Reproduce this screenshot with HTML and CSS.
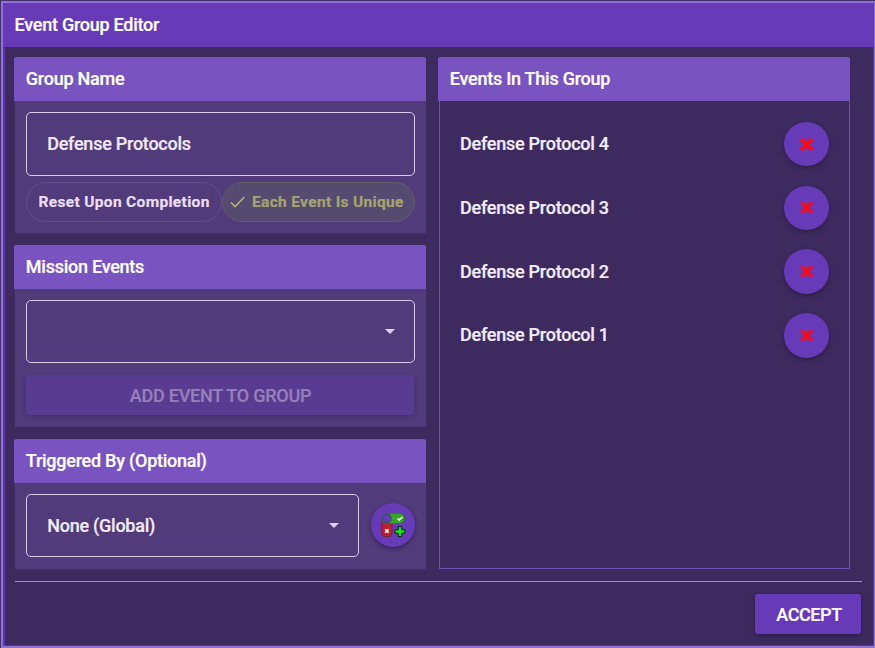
FILE: index.html
```html
<!DOCTYPE html>
<html lang="en">
<head>
<meta charset="utf-8">
<title>Event Group Editor</title>
<link rel="stylesheet" href="styles.css">
</head>
<body>
<div class="dialog">
  <header class="dialog-title">Event Group Editor</header>
  <main class="dialog-body">
    <div class="column">
      <section class="card name-card">
        <h2>Group Name</h2>
        <div class="card-body">
          <div class="field">Defense Protocols</div>
          <div class="chips">
            <span class="chip">Reset Upon Completion</span>
            <span class="chip selected"><svg width="18" height="18" viewBox="0 0 18 18"><path d="M2 9.500 6 13.500 15.500 4"/></svg>Each Event Is Unique</span>
          </div>
        </div>
      </section>
      <section class="card mission-card">
        <h2>Mission Events</h2>
        <div class="card-body">
          <div class="field select"><span></span><i class="arrow"></i></div>
          <button class="btn add" disabled>ADD EVENT TO GROUP</button>
        </div>
      </section>
      <section class="card trigger-card">
        <h2>Triggered By (Optional)</h2>
        <div class="card-body trigger-row">
          <div class="field select"><span>None (Global)</span><i class="arrow"></i></div>
          <button class="fab" aria-label="Add trigger">
            <svg width="26" height="26" viewBox="0 0 26 26">
              <path d="M1.600 10h10.500v11a3.500 3.500 0 0 1-3.500 3.500H5.100a3.500 3.500 0 0 1-3.500-3.500z" fill="#b9202e" stroke="#7d1e40"/>
              <rect x="1.600" y="1.300" width="23" height="10.200" rx="5.100" fill="#39a22f" stroke="#327238"/>
              <circle cx="6.800" cy="6.400" r="4.200" fill="#673ab7" stroke="#3c4a80" stroke-width="1.400"/>
              <path d="m17.500 6.300 1.700 1.700 3.300-3.300" fill="none" stroke="#dfffe0" stroke-width="1.600"/>
              <path d="m5.200 17.300 3.400 3.400m0-3.400-3.400 3.400" stroke="#fff" stroke-width="1.600"/>
              <path d="M18.300 14.500h3.400v3.300H25v3.400h-3.300v3.300h-3.400v-3.300H15v-3.400h3.300z" fill="#13e81b" stroke="#06200b"/>
            </svg>
          </button>
        </div>
      </section>
    </div>
    <section class="events">
      <h2>Events In This Group</h2>
      <ul>
        <li>Defense Protocol 4<button class="fab"><svg width="15" height="15" viewBox="0 0 15 15"><path d="m2.500 2.200 10.500 10.500m0-10.500-10.500 10.500"/></svg></button></li>
        <li>Defense Protocol 3<button class="fab"><svg width="15" height="15" viewBox="0 0 15 15"><path d="m2.500 2.200 10.500 10.500m0-10.500-10.500 10.500"/></svg></button></li>
        <li>Defense Protocol 2<button class="fab"><svg width="15" height="15" viewBox="0 0 15 15"><path d="m2.500 2.200 10.500 10.500m0-10.500-10.500 10.500"/></svg></button></li>
        <li>Defense Protocol 1<button class="fab"><svg width="15" height="15" viewBox="0 0 15 15"><path d="m2.500 2.200 10.500 10.500m0-10.500-10.500 10.500"/></svg></button></li>
      </ul>
    </section>
  </main>
  <footer><button class="btn accept">ACCEPT</button></footer>
</div>
</body>
</html>
```
FILE: styles.css
```css
* { box-sizing: border-box; }
body {
  margin: 0;
  height: 648px;
  padding: 1px 0 0 1px;
  overflow: hidden;
  background: #46316f;
  font: 500 18px/24px Roboto, sans-serif;
  letter-spacing: -.25px;
  -webkit-text-stroke: .2px;
  color: #fff;
}
.dialog {
  height: 647px;
  display: flex;
  flex-direction: column;
  background: #3d2b60;
  border: 2px solid #9370d6;
  border-right-width: 1px;
  box-shadow: inset 2px 0 #5b36aa, inset -1px -1px #5b36aa;
}
.dialog-title {
  height: 44px;
  padding: 10px 11.500px;
  background: #673ab7;
}
.dialog-body {
  display: flex;
  gap: 12px;
  height: 512px;
  margin: 10px 24px 0 11px;
}
.column {
  width: 412px;
  display: flex;
  flex-direction: column;
  gap: 12px;
}
h2 {
  margin: 0;
  height: 44px;
  padding: 10px 11.800px;
  font: inherit;
  background: #7953bf;
  border-radius: 2px 2px 0 0;
}
.card-body {
  margin-left: 1px;
  padding: 11px;
  background: #513b7a;
}
.name-card .card-body { height: 132px; }
.mission-card .card-body { height: 138px; }
.trigger-card .card-body { height: 86px; }
.field {
  height: 64px;
  padding: 0 19px 0 20.200px;
  display: flex;
  align-items: center;
  border: 1px solid #dacbea;
  border-radius: 5px;
  color: #f2e9fa;
}
.select { justify-content: space-between; height: 63px; }
.arrow {
  border: 5px solid transparent;
  border-top-color: #ded0ec;
  border-bottom: 0;
}
.chips {
  display: flex;
  margin-top: 6px;
}
.chip {
  display: flex;
  align-items: center;
  width: 196px;
  height: 40px;
  padding: 0 0 1px 11.500px;
  border: 1px solid #634d8d;
  border-radius: 20px;
  font-size: 15.500px;
  font-weight: 700;
  letter-spacing: .33px;
  color: #eadff7;
  white-space: nowrap;
}
.chip.selected {
  width: 193px;
  padding-left: 6px;
  gap: 5px;
  background: #554b70;
  border-color: #635c69;
  color: #a5a470;
}
.chip svg { fill: none; stroke: #b0b36b; stroke-width: 1.600; }
button {
  border: 0;
  padding: 0;
  font: inherit;
  letter-spacing: inherit;
  color: #fff;
  background: #673ab7;
  box-shadow: 0 2px 4px rgba(25, 12, 48, .45);
}
.btn {
  width: 106px;
  height: 40px;
  border-radius: 3px;
}
.accept { padding: 2px 0 0 2px; letter-spacing: -.4px; }
.add {
  display: block;
  width: 388px;
  margin-top: 12px;
  padding: 2px 0 0 1px;
  background: #5a3b92;
  color: #9680b8;
  box-shadow: 0 2px 4px rgba(45, 25, 80, .3);
}
.trigger-row { display: flex; gap: 12px; align-items: flex-start; }
.trigger-row .field { width: 333px; }
.fab {
  width: 45px;
  height: 45px;
  flex: none;
  display: grid;
  place-items: center;
  border-radius: 50%;
}
.trigger-row .fab { width: 44px; height: 44px; margin-top: 9px; }
.events {
  width: 412px;
  display: flex;
  flex-direction: column;
}
.events ul {
  flex: 1;
  margin: 0 0 0 1px;
  padding: 11.400px 20px;
  list-style: none;
  border: 1px solid #7350b8;
  border-top: 0;
}
.events li {
  height: 63.700px;
  display: flex;
  align-items: center;
  justify-content: space-between;
  color: #f4ecfb;
}
.events .fab { height: 44.500px; }
.events path { stroke: #ff0712; stroke-width: 3.700; }
footer {
  display: flex;
  justify-content: flex-end;
  margin: 12px 12px 0 12px;
  padding: 12px 1px 0 0;
  border-top: 1px solid #a694a6;
}
```
